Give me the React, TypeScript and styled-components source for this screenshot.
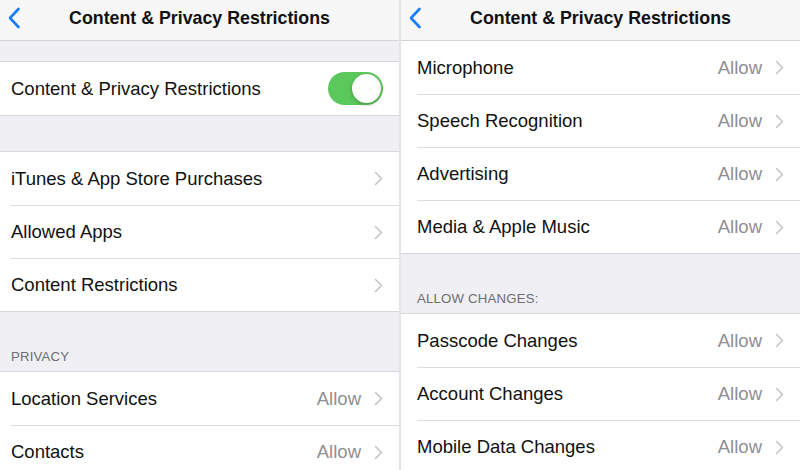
import React from 'react';
import styled, { createGlobalStyle } from 'styled-components';

const GlobalStyle = createGlobalStyle`
  html, body {
    margin: 0;
    padding: 0;
    background: #efeff4;
  }
  body {
    font-family: "Liberation Sans", Arial, sans-serif;
    -webkit-font-smoothing: antialiased;
  }
`;

const Screen = styled.div`
  display: flex;
  width: 800px;
  height: 470px;
  overflow: hidden;
  background: #e3e3e8;
  gap: 2px;
`;

const Panel = styled.div<{ $inset: number }>`
  flex: 1;
  display: flex;
  flex-direction: column;
  background: #efeff4;
  overflow: hidden;
  --inset: ${(p) => p.$inset}px;
`;

const NavBar = styled.div`
  position: relative;
  flex: none;
  height: 41px;
  padding-bottom: 3px;
  box-sizing: border-box;
  display: flex;
  align-items: center;
  justify-content: center;
  background: #f7f7f8;
  border-bottom: 1px solid #d4d4d8;
  z-index: 1;
`;

const NavTitle = styled.div`
  font-size: 17.8px;
  font-weight: 700;
  color: #111;
`;

const BackButton = styled.div`
  position: absolute;
  left: 7px;
  top: 7px;
  width: 14px;
  height: 22px;
  display: flex;
`;

const Spacer = styled.div<{ $h: number }>`
  flex: none;
  height: ${(p) => p.$h}px;
`;

const SectionHeader = styled.div<{ $h: number }>`
  flex: none;
  height: ${(p) => p.$h}px;
  display: flex;
  align-items: flex-end;
  padding: 0 0 7px var(--inset);
  box-sizing: border-box;
  font-size: 13.2px;
  color: #6d6d72;
  letter-spacing: 0.2px;
`;

const Group = styled.div<{ $open?: boolean }>`
  flex: none;
  background: #fff;
  border-top: ${(p) => (p.$open ? 'none' : '1px solid #d8d8dc')};
  border-bottom: 1px solid #d8d8dc;
`;

const Row = styled.div`
  height: 53px;
  padding-left: var(--inset);
  display: flex;

  & + & > div {
    border-top: 1px solid #dcdce0;
  }
`;

const RowInner = styled.div`
  flex: 1;
  display: flex;
  align-items: center;
  padding-right: 16px;
  box-sizing: border-box;
`;

const Label = styled.div`
  flex: 1;
  font-size: 18.5px;
  color: #111;
`;

const Value = styled.div`
  font-size: 18.5px;
  color: #8e8e93;
  margin-right: 13px;
`;

const ChevronBox = styled.div`
  width: 9px;
  height: 15px;
  display: flex;
`;

const ToggleTrack = styled.div`
  position: relative;
  width: 55px;
  height: 33px;
  border-radius: 17px;
  background: #5bc85b;
`;

const ToggleKnob = styled.div`
  position: absolute;
  right: 2px;
  top: 2px;
  width: 29px;
  height: 29px;
  border-radius: 50%;
  background: #fff;
  box-shadow: 0 2px 4px rgba(0, 0, 0, 0.22), 0 0 1px rgba(0, 0, 0, 0.15);
`;

const Chevron = () => (
  <ChevronBox>
    <svg width="9" height="15" viewBox="0 0 9 15">
      <path d="M1.5 1.5 L7.5 7.5 L1.5 13.5" fill="none" stroke="#c4c4c9" strokeWidth="1.6" strokeLinecap="round" strokeLinejoin="round" />
    </svg>
  </ChevronBox>
);

const Back = () => (
  <BackButton>
    <svg width="14" height="22" viewBox="0 0 14 22">
      <path d="M11.5 2 L3 11 L11.5 20" fill="none" stroke="#1a7cf5" strokeWidth="2.6" strokeLinecap="round" strokeLinejoin="round" />
    </svg>
  </BackButton>
);

const Toggle = () => (
  <ToggleTrack>
    <ToggleKnob />
  </ToggleTrack>
);

type Item = { label: string; value?: string };

const ListRow = ({ label, value }: Item) => (
  <Row>
    <RowInner>
      <Label>{label}</Label>
      {value && <Value>{value}</Value>}
      <Chevron />
    </RowInner>
  </Row>
);

const purchases: Item[] = [
  { label: 'iTunes & App Store Purchases' },
  { label: 'Allowed Apps' },
  { label: 'Content Restrictions' },
];

const privacy: Item[] = [
  { label: 'Location Services', value: 'Allow' },
  { label: 'Contacts', value: 'Allow' },
];

const media: Item[] = [
  { label: 'Microphone', value: 'Allow' },
  { label: 'Speech Recognition', value: 'Allow' },
  { label: 'Advertising', value: 'Allow' },
  { label: 'Media & Apple Music', value: 'Allow' },
];

const changes: Item[] = [
  { label: 'Passcode Changes', value: 'Allow' },
  { label: 'Account Changes', value: 'Allow' },
  { label: 'Mobile Data Changes', value: 'Allow' },
];

const App = () => {
  return (
    <>
      <GlobalStyle />
      <Screen>
        <Panel $inset={11}>
          <NavBar>
            <Back />
            <NavTitle>Content &amp; Privacy Restrictions</NavTitle>
          </NavBar>
          <Spacer $h={20} />
          <Group>
            <Row>
              <RowInner>
                <Label>Content &amp; Privacy Restrictions</Label>
                <Toggle />
              </RowInner>
            </Row>
          </Group>
          <Spacer $h={35} />
          <Group>
            {purchases.map((it) => (
              <ListRow key={it.label} {...it} />
            ))}
          </Group>
          <SectionHeader $h={59}>PRIVACY</SectionHeader>
          <Group>
            {privacy.map((it) => (
              <ListRow key={it.label} {...it} />
            ))}
          </Group>
        </Panel>
        <Panel $inset={16}>
          <NavBar>
            <Back />
            <NavTitle>Content &amp; Privacy Restrictions</NavTitle>
          </NavBar>
          <Group $open>
            {media.map((it) => (
              <ListRow key={it.label} {...it} />
            ))}
          </Group>
          <SectionHeader $h={59}>ALLOW CHANGES:</SectionHeader>
          <Group>
            {changes.map((it) => (
              <ListRow key={it.label} {...it} />
            ))}
          </Group>
        </Panel>
      </Screen>
    </>
  );
};

export default App;
